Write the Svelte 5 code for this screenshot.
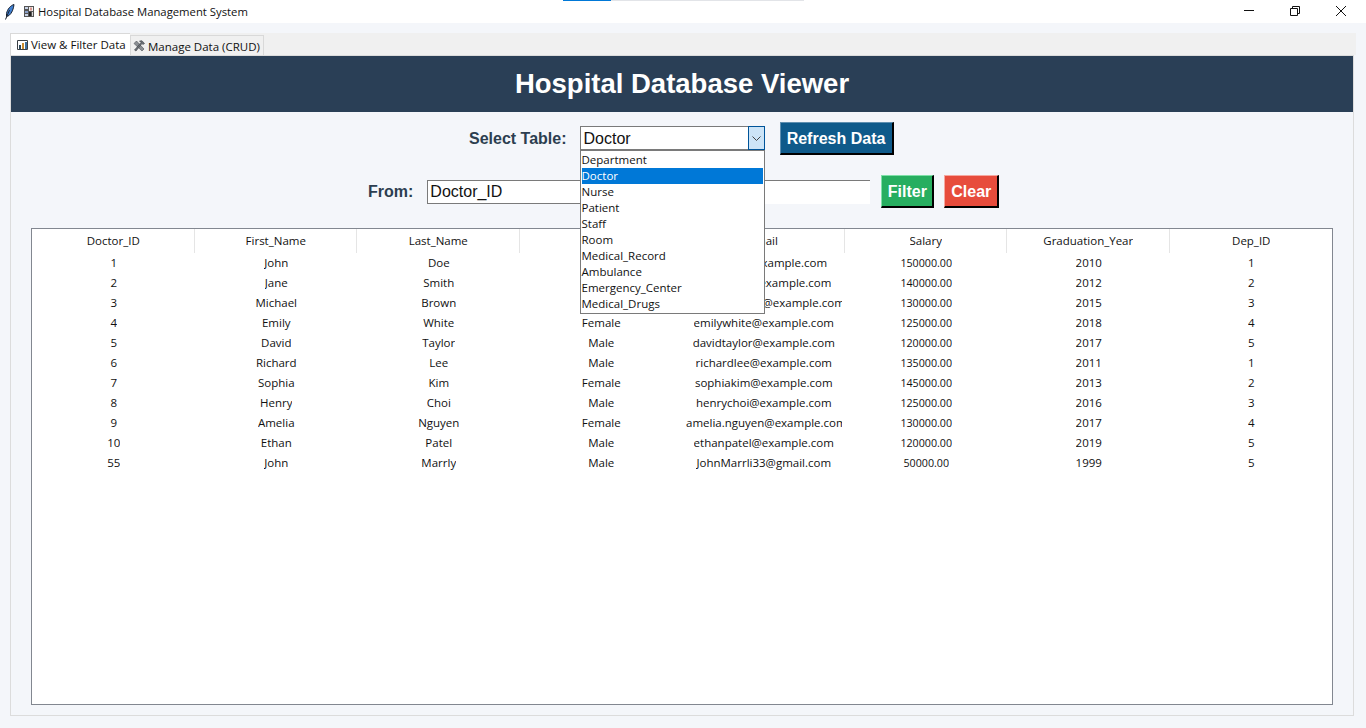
<script>
	const options = ['Department', 'Doctor', 'Nurse', 'Patient', 'Staff', 'Room', 'Medical_Record', 'Ambulance', 'Emergency_Center', 'Medical_Drugs'];
	const columns = ['Doctor_ID', 'First_Name', 'Last_Name', 'Gender', 'Email', 'Salary', 'Graduation_Year', 'Dep_ID'];
	const rows = [
		['1', 'John', 'Doe', 'Male', 'johndoe@example.com', '150000.00', '2010', '1'],
		['2', 'Jane', 'Smith', 'Female', 'janesmith@example.com', '140000.00', '2012', '2'],
		['3', 'Michael', 'Brown', 'Male', 'michaelbrown@example.com', '130000.00', '2015', '3'],
		['4', 'Emily', 'White', 'Female', 'emilywhite@example.com', '125000.00', '2018', '4'],
		['5', 'David', 'Taylor', 'Male', 'davidtaylor@example.com', '120000.00', '2017', '5'],
		['6', 'Richard', 'Lee', 'Male', 'richardlee@example.com', '135000.00', '2011', '1'],
		['7', 'Sophia', 'Kim', 'Female', 'sophiakim@example.com', '145000.00', '2013', '2'],
		['8', 'Henry', 'Choi', 'Male', 'henrychoi@example.com', '125000.00', '2016', '3'],
		['9', 'Amelia', 'Nguyen', 'Female', 'amelia.nguyen@example.com', '130000.00', '2017', '4'],
		['10', 'Ethan', 'Patel', 'Male', 'ethanpatel@example.com', '120000.00', '2019', '5'],
		['55', 'John', 'Marrly', 'Male', 'JohnMarrli33@gmail.com', '50000.00', '1999', '5']
	];
	let selected = 'Doctor';
</script>

<div class="window">
	<div class="progress"><span></span></div>

	<div class="titlebar">
		<svg class="feather" width="10" height="16" viewBox="0 0 10 16">
			<path d="M9 0.500C5.500 1.500 2.500 5 1.500 9.500L1.500 12.500L4 11.500C7 9 8.500 5 9 0.500z" fill="#3f7fd0" stroke="#1a2230" />
			<path d="M0.500 15.500L4.500 6" stroke="#1a2230" fill="none" />
		</svg>
		<svg class="hospital" width="10" height="11" viewBox="0 0 10 11">
			<rect x="0" y="0" width="10" height="11" fill="#555" />
			<rect x="1" y="1" width="3" height="2" fill="#c9d3e6" />
			<rect x="5" y="1" width="4" height="4" fill="#f2f2f2" />
			<rect x="6.500" y="1.500" width="1" height="3" fill="#c0392b" />
			<rect x="1" y="5" width="3" height="2" fill="#8aa0c8" />
			<rect x="5" y="6" width="2" height="4" fill="#222" />
			<rect x="1" y="8" width="3" height="2" fill="#c9d3e6" />
			<rect x="8" y="6" width="1" height="4" fill="#d8d8d8" />
		</svg>
		<span class="title">Hospital Database Management System</span>
		<div class="controls">
			<svg width="12" height="12" viewBox="0 0 12 12"><path d="M1 5.500h10" stroke="#111" /></svg>
			<svg width="12" height="12" viewBox="0 0 12 12"><path d="M1.500 3.500h7v7h-7zM3.500 3.500v-2h7v7h-2" stroke="#111" fill="none" /></svg>
			<svg width="12" height="12" viewBox="0 0 12 12"><path d="M1 1l10 10M11 1L1 11" stroke="#111" /></svg>
		</div>
	</div>

	<div class="notebook">
		<div class="tabs">
			<div class="tab active">
				<svg width="11" height="11" viewBox="0 0 11 11">
					<path d="M0.500 10.500V1.500H10.500V10.500z" stroke="#3a3f45" fill="#fff" />
					<path d="M2 6h2v4H2z" fill="#2f4a5c" />
					<path d="M5 4h2v6H5z" fill="#c98a2b" />
					<path d="M8 3h2v7H8z" fill="#3d6f9e" />
				</svg>
				<span>View &amp; Filter Data</span>
			</div>
			<div class="tab">
				<svg width="12" height="12" viewBox="0 0 12 12">
					<path d="M1 3.500L3.500 1L11 9L9 11z" fill="#8b8f94" stroke="#4a4d52" stroke-width="0.600" />
					<path d="M1.500 10L8 2.500L6.500 1L9 0.800L11.500 3.500L9.800 4.500L9 3.500L3 11z" fill="#6b7076" stroke="#3c3f44" stroke-width="0.600" />
				</svg>
				<span>Manage Data (CRUD)</span>
			</div>
		</div>

		<div class="panel">
			<header>Hospital Database Viewer</header>

			<div class="controls-row">
				<label for="table-select">Select Table:</label>
				<div class="combo">
					<span id="table-select" class="combo-value">{selected}</span>
					<span class="arrow">
						<svg width="9" height="5" viewBox="0 0 9 5"><path d="M0.500 0.500l4 4 4-4" stroke="#444" fill="none" /></svg>
					</span>
					<ul class="dropdown">
						{#each options as option}
							<li class:current={option === selected}>{option}</li>
						{/each}
					</ul>
				</div>
				<button class="btn refresh">Refresh Data</button>
			</div>

			<div class="filter-row">
				<label for="from">From:</label>
				<input id="from" class="field-from" value="Doctor_ID" />
				<input class="field-value" aria-label="Filter value" />
				<button class="btn filter">Filter</button>
				<button class="btn clear">Clear</button>
			</div>

			<div class="table">
				<div class="row head">
					{#each columns as column}
						<div class="cell"><span>{column}</span></div>
					{/each}
				</div>
				{#each rows as row}
					<div class="row">
						{#each row as value, i}
							<div class="cell" class:num={i === 5}><span>{value}</span></div>
						{/each}
					</div>
				{/each}
			</div>
		</div>
	</div>
</div>

<style>
	:global(body) {
		margin: 0;
		background: #f4f6fa;
	}
	.window {
		position: relative;
		height: 728px;
		overflow: hidden;
		font-family: "Open Sans", "Noto Sans", sans-serif;
		font-size: 11.500px;
		color: #111;
	}
	.progress {
		position: absolute;
		left: 563px;
		top: 0;
		width: 241px;
		height: 1px;
		background: #e2e4e8;
	}
	.progress span {
		display: block;
		width: 48px;
		height: 1px;
		background: #0078d7;
	}
	.titlebar {
		height: 23px;
		background: #fff;
		display: flex;
		align-items: center;
	}
	.feather {
		margin-left: 5px;
	}
	.hospital {
		margin-left: 9px;
	}
	.title {
		margin-left: 4px;
		font-size: 11.300px;
	}
	.controls {
		margin-left: auto;
		margin-top: -2px;
		display: flex;
		gap: 34px;
		margin-right: 19px;
	}
	.notebook {
		margin: 10px 10px 0 10px;
		width: 1346px;
	}
	.tabs {
		display: flex;
		align-items: flex-end;
		height: 22px;
		background: #f0f0f0;
	}
	.tab {
		display: flex;
		align-items: center;
		gap: 3px;
		height: 20px;
		box-sizing: border-box;
		padding: 1px 3px 0 2px;
		border: 1px solid #d9d9d9;
		border-bottom: none;
		background: #f0f0f0;
		white-space: nowrap;
	}
	.tab.active {
		height: 22px;
		width: 120px;
		background: #fff;
		padding: 0 0 1px 6px;
		border-right: none;
	}
	.panel {
		height: 661px;
		border: 1px solid #dcdcdc;
		box-sizing: border-box;
		display: flex;
		flex-direction: column;
		width: 1344px;
	}
	header {
		height: 56px;
		background: #2a3f56;
		color: #fff;
		font: bold 27.500px "Liberation Sans", Arial, sans-serif;
		display: flex;
		align-items: center;
		justify-content: center;
		flex-shrink: 0;
	}
	label {
		font: bold 16px "Liberation Sans", Arial, sans-serif;
		color: #2c3e50;
		padding-top: 1px;
	}
	.controls-row {
		display: flex;
		align-items: center;
		height: 36px;
		margin-top: 8px;
		padding-left: 458px;
	}
	.combo {
		position: relative;
		margin-left: 13px;
		width: 185px;
		height: 24px;
		box-sizing: border-box;
		border: 1px solid #7a7a7a;
		background: #fff;
		font: 16px "Liberation Sans", Arial, sans-serif;
		display: flex;
		align-items: center;
		padding: 1px 0 0 3px;
	}
	.combo-value {
		flex: 1;
	}
	.arrow {
		position: absolute;
		right: -1px;
		top: -1px;
		width: 17px;
		height: 24px;
		box-sizing: border-box;
		border: 1px solid #005499;
		background: #cce4f7;
		display: flex;
		align-items: center;
		justify-content: center;
	}
	.dropdown {
		position: absolute;
		z-index: 5;
		left: -1px;
		top: 23px;
		width: 185px;
		box-sizing: border-box;
		margin: 0;
		padding: 1px;
		list-style: none;
		background: #fff;
		border: 1px solid #7a7a7a;
		font: 11.500px "Open Sans", "Noto Sans", sans-serif;
	}
	.dropdown li {
		height: 16px;
		line-height: 16px;
	}
	.dropdown li.current {
		background: #0078d7;
		color: #fff;
	}
	.btn {
		font: bold 16px "Liberation Sans", Arial, sans-serif;
		color: #fff;
		border-style: solid;
		border-width: 1px 2px 2px 1px;
		height: 33px;
		box-sizing: border-box;
		padding: 1px 0 0 0;
	}
	.refresh {
		margin-left: 15px;
		width: 114px;
		padding-top: 3px;
		background: #0f5a8a;
		border-color: #5f8fb0 #000 #000 #5f8fb0;
	}
	.filter-row {
		display: flex;
		align-items: center;
		height: 33px;
		margin-top: 19px;
		padding-left: 357px;
	}
	input {
		height: 24px;
		box-sizing: border-box;
		background: #fff;
		font: 16px "Liberation Sans", Arial, sans-serif;
		padding: 0 2px;
		color: #111;
		outline: none;
		border-radius: 0;
	}
	.field-from {
		margin-left: 14px;
		width: 180px;
		border: 1px solid #7a7a7a;
	}
	.field-value {
		width: 263px;
		border: none;
		border-top: 1px solid #7a7a7a;
	}
	.filter {
		margin-left: 11px;
		width: 53px;
		background: #27ae60;
		border-color: #7fe0a8 #000 #000 #7fe0a8;
	}
	.clear {
		margin-left: 10px;
		width: 55px;
		background: #e74c3c;
		border-color: #f5a8a0 #000 #000 #f5a8a0;
	}
	.table {
		margin: 20px 0 0 20px;
		width: 1302px;
		height: 477px;
		box-sizing: border-box;
		border: 1px solid #828790;
		background: #fff;
	}
	.row {
		display: grid;
		grid-template-columns: repeat(8, minmax(0, 1fr));
		height: 20px;
	}
	.row.head {
		height: 24px;
	}
	.cell {
		display: flex;
		align-items: center;
		justify-content: center;
		padding: 0 3px 0 4px;
		box-sizing: border-box;
		min-width: 0;
	}
	.cell span {
		min-width: 0;
		overflow: hidden;
		white-space: nowrap;
		padding-bottom: 2px;
	}
	.cell.num {
		font-size: 10.700px;
	}
	.cell.num span {
		padding: 0;
		line-height: 15px;
	}
	.head .cell {
		border-right: 1px solid #e5e5e5;
	}
	.head .cell:last-child {
		border-right: none;
	}
</style>
